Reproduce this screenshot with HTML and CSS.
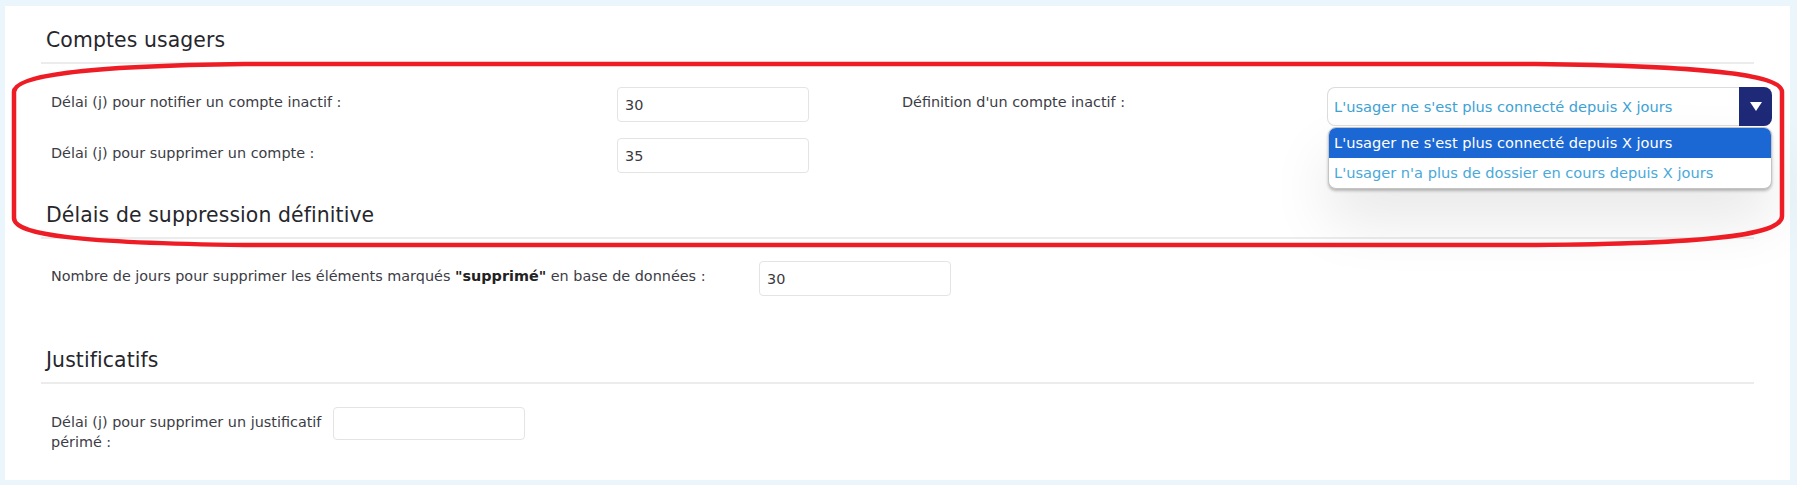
FILE: index.html
```html
<!DOCTYPE html>
<html lang="fr">
<head>
    <meta charset="UTF-8">
    <meta name="viewport" content="width=device-width, initial-scale=1.0">
    <title>Paramètres - Comptes usagers</title>
    <link rel="stylesheet" href="styles.css">
</head>
<body>
    <div class="panel">
        <!-- Comptes usagers -->
        <h2 class="section-title">Comptes usagers</h2>
        <div class="accounts-grid">
            <div class="col-left">
                <div class="field-row">
                    <label class="field-label label-accounts">Délai (j) pour notifier un compte inactif :</label>
                    <input class="field-input" type="text" value="30">
                </div>
                <div class="field-row row-second">
                    <label class="field-label label-accounts">Délai (j) pour supprimer un compte :</label>
                    <input class="field-input" type="text" value="35">
                </div>
            </div>
            <div class="col-right">
                <label class="field-label label-definition">Définition d'un compte inactif :</label>
                <div class="select-box">
                    <div class="select-value">L'usager ne s'est plus connecté depuis X jours</div>
                    <div class="select-arrow">
                        <svg width="12" height="9" viewBox="0 0 12 9"><path d="M0 0H12L6 9Z" fill="#fff"/></svg>
                    </div>
                    <ul class="select-options">
                        <li class="option selected">L'usager ne s'est plus connecté depuis X jours</li>
                        <li class="option">L'usager n'a plus de dossier en cours depuis X jours</li>
                    </ul>
                </div>
            </div>
        </div>

        <!-- Délais de suppression définitive -->
        <h2 class="section-title title-deletion">Délais de suppression définitive</h2>
        <div class="field-row row-deletion">
            <label class="field-label label-deletion">Nombre de jours pour supprimer les éléments marqués <strong>"supprimé"</strong> en base de données :</label>
            <input class="field-input" type="text" value="30">
        </div>

        <!-- Justificatifs -->
        <h2 class="section-title title-proofs">Justificatifs</h2>
        <div class="field-row row-proofs">
            <label class="field-label label-proofs">Délai (j) pour supprimer un justificatif périmé :</label>
            <input class="field-input input-small" type="text" value="">
        </div>
    </div>

    <!-- annotation tracée à la main sur la capture -->
    <svg class="annotation" width="1797" height="485" viewBox="0 0 1797 485">
        <path d="M245 64 L1536 64 C1700 66 1782 74 1782 92 L1782 216 C1782 236 1700 244 1536 245 L245 245 C80 243 14 235 14 218 L14 92 C14 76 80 66 245 64 Z"
              fill="none" stroke="#ee1d25" stroke-width="4.5"/>
    </svg>
</body>
</html>
```

FILE: styles.css
```css
/* Page */
body {
    margin: 0;
    background: #eaf6fc;
    font-family: 'DejaVu Sans', 'Liberation Sans', sans-serif;
    color: #3c3c46;
    position: relative;
}

.panel {
    background: #fff;
    margin: 6px 7px 5px 5px;
    padding: 0 36px;
    height: 474px;
    box-sizing: border-box;
    overflow: visible;
}

.section-title {
    margin: 0;
    padding: 22px 0 10px 5px;
    font-size: 20.4px;
    line-height: 24px;
    font-weight: normal;
    letter-spacing: 0.1px;
    color: #26262c;
    border-bottom: 2px solid #ececec;
}

.title-deletion {
    margin-top: 30px;
    padding-top: 0;
}

.title-proofs {
    margin-top: 52px;
    padding-top: 0;
}

/* Rangées de champs */
.accounts-grid {
    display: flex;
    margin-top: 23px;
}

.col-left {
    width: 851px;
    flex-shrink: 0;
}

.col-right {
    display: flex;
    align-items: flex-start;
    flex-shrink: 0;
}

.field-row {
    display: flex;
    align-items: flex-start;
}

.row-second {
    margin-top: 16px;
}

.row-deletion {
    margin-top: 22px;
}

.row-proofs {
    margin-top: 23px;
}

.field-label {
    box-sizing: border-box;
    flex-shrink: 0;
    padding: 5px 5px 0 10px;
    font-size: 14.4px;
    line-height: 20px;
}

.field-label strong {
    color: #222;
}

.label-accounts {
    width: 576px;
}

.label-definition {
    width: 435px;
}

.label-deletion {
    width: 718px;
}

.label-proofs {
    width: 292px;
}

.field-input {
    box-sizing: border-box;
    width: 192px;
    height: 35px;
    margin: 0;
    padding: 0 7px;
    border: 1px solid #e4e4e4;
    border-radius: 4px;
    font-family: inherit;
    font-size: 14.4px;
    color: #3a3a40;
    background: #fff;
    outline: none;
}

.input-small {
    height: 33px;
}

/* Liste déroulante */
.select-box {
    position: relative;
    display: flex;
    width: 445px;
    height: 39px;
    flex-shrink: 0;
}

.select-value {
    flex: 1;
    border: 1px solid #dcdcdc;
    border-right: none;
    border-radius: 8px 0 0 8px;
    padding-left: 6px;
    font-size: 14.6px;
    line-height: 37px;
    color: #3ea2d5;
    white-space: nowrap;
}

.select-arrow {
    width: 33px;
    display: flex;
    align-items: center;
    justify-content: center;
    background: #1e2a78;
    border-radius: 0 8px 8px 0;
}

.select-options {
    position: absolute;
    top: 40px;
    left: 1px;
    right: 0;
    margin: 0;
    padding: 0;
    list-style: none;
    background: #fff;
    border: 1px solid #c4c4c4;
    border-radius: 8px;
    overflow: hidden;
    box-shadow: 0 2px 3px rgba(0, 0, 0, 0.25), 0 30px 60px rgba(0, 0, 0, 0.1);
    z-index: 2;
}

.option {
    height: 30px;
    padding-left: 5px;
    font-size: 14.6px;
    line-height: 30px;
    color: #4aa8da;
    white-space: nowrap;
}

.option.selected {
    background: #1b67d3;
    color: #fff;
}

/* Annotation rouge */
.annotation {
    position: absolute;
    left: 0;
    top: 0;
    pointer-events: none;
    z-index: 5;
}
```
